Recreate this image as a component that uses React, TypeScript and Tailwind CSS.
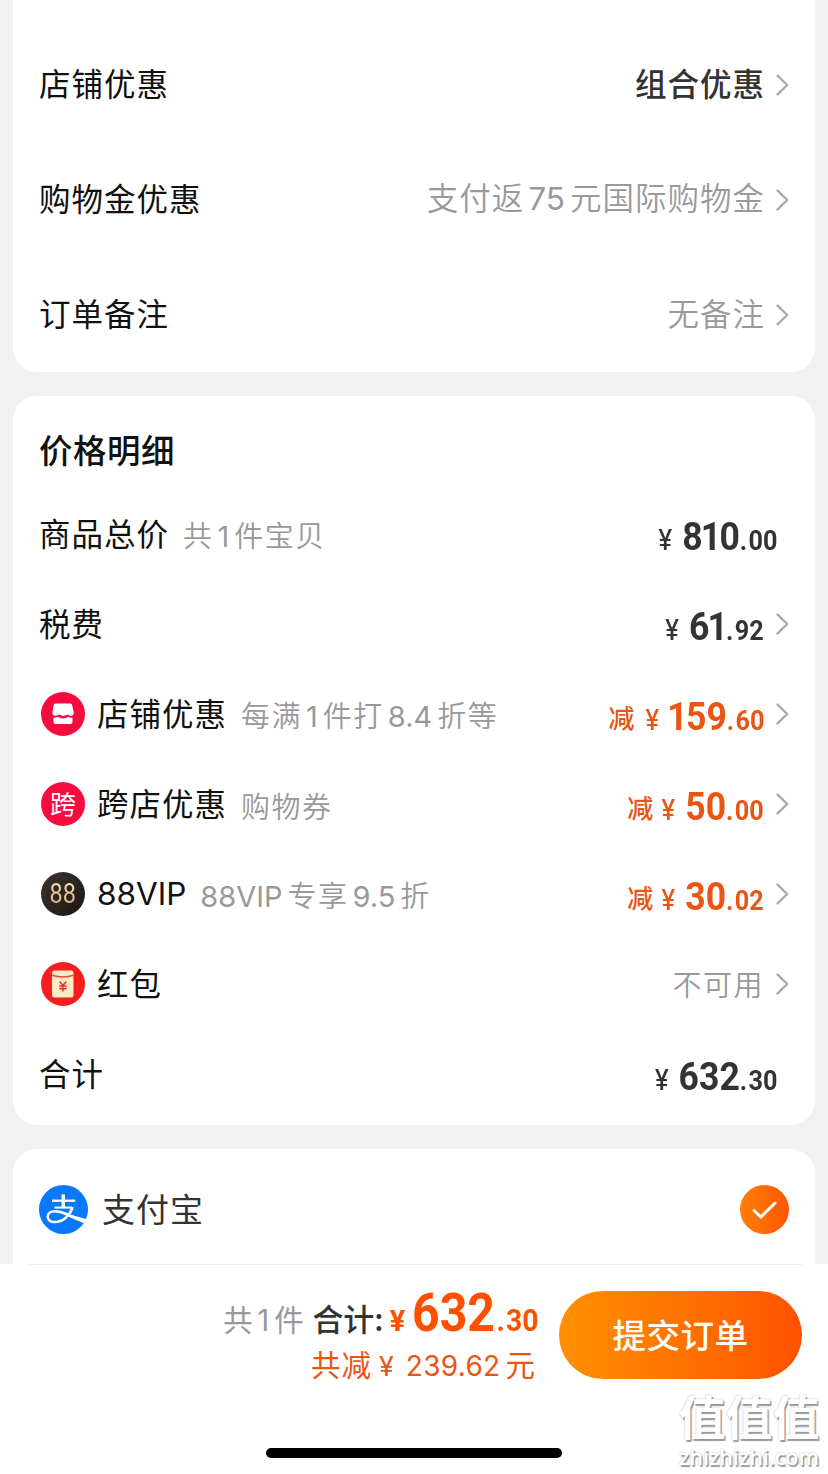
import type { ReactNode } from "react";
import clsx from "clsx";

const Chevron = () => (
  <svg
    className="ml-3 h-6 w-[13px] shrink-0"
    viewBox="0 0 13 24"
    fill="none"
    stroke="#aaaaaa"
    strokeWidth="2.4"
    strokeLinecap="round"
    strokeLinejoin="round"
  >
    <path d="M1.6 2.6 11.2 12 1.6 21.4" />
  </svg>
);

const StoreIcon = () => (
  <svg className="size-11" viewBox="0 0 44 44">
    <circle cx="22" cy="22" r="22" fill="#fb0a3f" />
    <path
      fill="#fff"
      d="M14.5 11.5h14.6c1 0 1.7.6 2 1.5l1.6 7.2c.3 1.7-.6 3.2-2.2 3.6-1.6.3-2.6-.8-4-1-1.5-.2-2.3 1.1-4.3 1.1s-2.8-1.3-4.3-1.1c-1.5.2-2.4 1.3-4 1-1.7-.4-2.8-1.9-2.5-3.6l1.2-7.2c.2-.9.9-1.5 1.9-1.5z"
    />
    <path
      fill="#fff"
      d="M12.5 25.8c1.7.2 3-.3 4.2-1 1.8 1.4 3.5 1.6 5.3 1.6s3.6-.2 5.2-1.6c1.3.7 2.5 1.2 4.3 1v4c0 1.3-.8 2.1-2.1 2.1H14.6c-1.3 0-2.1-.8-2.1-2.1z"
    />
  </svg>
);

const CrossIcon = () => (
  <span className="flex size-11 items-center justify-center rounded-full bg-[#fb0a3f] pb-0.5 text-[26px] leading-none text-white">
    跨
  </span>
);

const VipIcon = () => (
  <span className="flex size-11 items-center justify-center rounded-full bg-linear-to-br from-[#3b332e] to-[#1d1815]">
    <span className="scale-x-[0.84] bg-linear-to-b from-[#f8e4c0] to-[#d3a873] bg-clip-text font-[Roboto] text-[28px] leading-none font-normal text-transparent">
      88
    </span>
  </span>
);

const RedPacketIcon = () => (
  <svg className="size-11" viewBox="0 0 44 44">
    <circle cx="22" cy="22" r="22" fill="#f51d1d" />
    <rect x="11" y="8.5" width="21.5" height="27" rx="2.5" fill="#feebc4" />
    <path d="M11 13.2c6.8 2.2 14.7 2.2 21.5 0" fill="none" stroke="#f0482f" strokeWidth="1.5" />
    <path
      d="m18.600 19.600 3.300 4 3.300-4M18.200 24h7.400M18.200 26.600h7.400M21.900 23.600v5.800"
      fill="none"
      stroke="#e0392b"
      strokeWidth="1.6"
    />
  </svg>
);

const AlipayIcon = () => (
  <svg className="size-[49px]" viewBox="0 0 49 49" fill="none">
    <circle cx="24.5" cy="24.5" r="24.5" fill="#0a78fa" />
    <path d="M24.3 9.5v12.8" stroke="#fff" strokeWidth="3.4" />
    <path d="M13 15.7h23.2" stroke="#fff" strokeWidth="2.3" />
    <path d="M15.5 22.6h17.7" stroke="#fff" strokeWidth="2" />
    <path
      d="M33.6 22.2C30.8 31 23.5 37 15.6 37c-4.6 0-6.9-2.4-6.9-5.2 0-3.2 3-5.5 7.2-5.5 4 0 8 1.4 12.5 3.2"
      stroke="#fff"
      strokeWidth="2.6"
    />
    <path fill="#fff" d="M24 26.8c7 2.6 15.5 5.3 24 7.5a24.5 24.5 0 0 1-2.3 4.200c-7.700-3-15.200-6.300-22.700-9.900z" />
  </svg>
);

// Chinese copy with the latin and digit runs spaced apart from it
const Mixed = ({ text }: { text: string }) => {
  const parts = text.split(/([0-9A-Z.]+)/);
  return (
    <>
      {parts.map((part, index) =>
        index % 2 === 1 ? (
          <span
            className={clsx(
              "font-[Inter] font-normal tracking-normal",
              parts[index - 1] && "ml-1",
              parts[index + 1] && "mr-[5px]"
            )}
            key={index}
          >
            {part}
          </span>
        ) : (
          part
        )
      )}
    </>
  );
};

interface PriceProps {
  value: string;
  minus?: boolean;
}

const Price: React.FC<PriceProps> = ({ value, minus }) => {
  const [whole, cents] = value.split(".");
  return (
    <span
      className={clsx(
        "flex items-baseline leading-none",
        minus ? "text-[#ea5514]" : "text-[#333333]"
      )}
    >
      {minus && (
        <span className="-mr-[3px] -translate-y-0.5 text-[26px] font-medium">减</span>
      )}
      <span className="inline-flex origin-right scale-x-90 items-baseline font-[Roboto] text-[39.5px] font-bold">
        <span className="mr-[11px] font-[Inter] text-[28px] font-medium">¥</span>
        {whole.split("").map((digit, index) => (
          <span className={clsx(digit === "1" && "-mx-0.5")} key={index}>
            {digit}
          </span>
        ))}
        <span className="text-[28px]">
          <span className="mr-[1.5px]">.</span>
          {cents}
        </span>
      </span>
    </span>
  );
};

interface PriceRow {
  label: string;
  icon?: ReactNode;
  note?: string;
  price?: string;
  minus?: boolean;
  status?: string;
  link?: boolean;
}

const options = [
  { label: "店铺优惠", value: "组合优惠", strong: true },
  { label: "购物金优惠", value: "支付返75元国际购物金" },
  { label: "订单备注", value: "无备注" },
];

const priceRows: PriceRow[] = [
  { label: "商品总价", note: "共1件宝贝", price: "810.00" },
  { label: "税费", price: "61.92", link: true },
  {
    label: "店铺优惠",
    icon: <StoreIcon />,
    note: "每满1件打8.4折等",
    price: "159.60",
    minus: true,
    link: true,
  },
  {
    label: "跨店优惠",
    icon: <CrossIcon />,
    note: "购物券",
    price: "50.00",
    minus: true,
    link: true,
  },
  {
    label: "88VIP",
    icon: <VipIcon />,
    note: "88VIP专享9.5折",
    price: "30.02",
    minus: true,
    link: true,
  },
  { label: "红包", icon: <RedPacketIcon />, status: "不可用", link: true },
  { label: "合计", price: "632.30" },
];

const OptionsCard = () => (
  <section className="rounded-b-3xl bg-white px-[26px] pt-[27px]">
    {options.map((item) => (
      <div className="flex h-[115px] items-center text-[31.5px] tracking-[1px]" key={item.label}>
        <span className="pb-[3px] text-[#111111]">{item.label}</span>
        <span
          className={clsx(
            "-mr-px ml-auto pb-[3px]",
            item.strong ? "font-medium text-[#333333]" : "font-[350] text-[#999999]"
          )}
        >
          <Mixed text={item.value} />
        </span>
        <Chevron />
      </div>
    ))}
  </section>
);

const PriceCard = () => (
  <section className="rounded-3xl bg-white px-[26px] pb-1.5">
    <h2 className="flex h-[93px] items-center pt-3.5 text-[33.5px] font-medium tracking-[0.5px] text-[#111111]">
      价格明细
    </h2>
    {priceRows.map((row) => (
      <div className="flex h-[90px] items-center" key={row.label}>
        {row.icon && <span className="mr-3 ml-0.5">{row.icon}</span>}
        <span className="pb-[3px] text-[31.5px] tracking-[1px] text-[#111111]">
          <Mixed text={row.label} />
        </span>
        {row.note && (
          <span className="ml-[14px] pt-[3px] text-[29px] font-[350] tracking-[1.5px] text-[#999999]">
            <Mixed text={row.note} />
          </span>
        )}
        <span className={clsx("ml-auto flex items-center", !row.link && "pr-3")}>
          {row.price && (
            <span className="pt-1.5">
              <Price value={row.price} minus={row.minus} />
            </span>
          )}
          {row.status && (
            <span className="text-[29px] font-[350] tracking-[1.5px] text-[#999999]">
              {row.status}
            </span>
          )}
          {row.link && <Chevron />}
        </span>
      </div>
    ))}
  </section>
);

const PaymentCard = () => (
  <section className="rounded-t-3xl bg-white px-[13px]">
    <div className="flex h-[115px] items-center px-[13px] pt-1.5">
      <AlipayIcon />
      <span className="ml-[14px] pb-0.5 text-[33px] tracking-[1px] text-[#333333]">支付宝</span>
      <span className="ml-auto flex size-[49px] items-center justify-center rounded-full bg-linear-to-r from-[#ff7f0a] to-[#ff5500]">
        <svg
          className="h-[18px] w-[25px]"
          viewBox="0 0 25 18"
          fill="none"
          stroke="#fff"
          strokeWidth="3"
          strokeLinecap="round"
          strokeLinejoin="round"
        >
          <path d="M2 9.5 8.8 16 23 2" />
        </svg>
      </span>
    </div>
  </section>
);

const SubmitBar = () => (
  <footer className="relative h-[210px] bg-white">
    <div className="mx-[26px] h-px bg-[#eeeeee]" />
    <div className="flex items-center justify-end pt-[26px] pr-[26px]">
      <div className="flex h-[88px] flex-col items-end">
        <div className="-mt-[3px] flex h-[52px] items-baseline leading-[51px]">
          <span className="text-[29.5px] tracking-[0.5px] text-[#999999]">
            <Mixed text="共1件" />
          </span>
          <span className="ml-2 text-[31px] font-medium text-[#333333]">合计:</span>
          <span className="ml-1.5 font-[Roboto] text-[29px] font-bold text-[#ff5000]">¥</span>
          <span className="-mr-[15px] ml-[7px] inline-flex origin-left scale-x-[0.91] items-baseline font-[Roboto] text-[53px] font-bold text-[#ff5000]">
            632
            <span className="text-[31px]">
              <span className="mx-[1.5px]">.</span>30
            </span>
          </span>
        </div>
        <div className="mt-0.5 text-[29.5px] leading-[43px] tracking-[1px] text-[#ea5514]">
          共减<span className="ml-[7px] font-[Inter] text-[27px] tracking-normal">¥</span>
          <span className="mr-[5px] ml-3 font-[Inter] text-[28px] tracking-[0.3px]">239.62</span>元
        </div>
      </div>
      <button className="ml-[23px] h-[88px] w-[243px] rounded-full bg-linear-to-r from-[#ff9000] to-[#ff5000] pb-0.5 text-[33.5px] font-medium tracking-[0.5px] text-white">
        提交订单
      </button>
    </div>
    <div className="absolute bottom-4 left-[266px] h-2.5 w-[296px] rounded-full bg-black" />
    <div className="absolute right-2 bottom-[5px] flex w-[142px] flex-col items-center text-white [text-shadow:1.5px_1.5px_1px_#999,0_0_2px_#bbb]">
      <span className="mb-1.5 text-[47px] leading-[48px] font-bold">值值值</span>
      <span className="font-['Open_Sans'] text-[21.5px] leading-6 font-semibold">zhizhizhi.com</span>
    </div>
  </footer>
);

export default function App() {
  return (
    <div
      className="flex h-[1474px] w-[828px] flex-col overflow-hidden bg-[#f1f1f1] font-['Noto_Sans_CJK_SC',sans-serif]"
      lang="zh-CN"
    >
      <main className="flex flex-1 flex-col gap-6 px-[13px]">
        <OptionsCard />
        <PriceCard />
        <PaymentCard />
      </main>
      <SubmitBar />
    </div>
  );
}
